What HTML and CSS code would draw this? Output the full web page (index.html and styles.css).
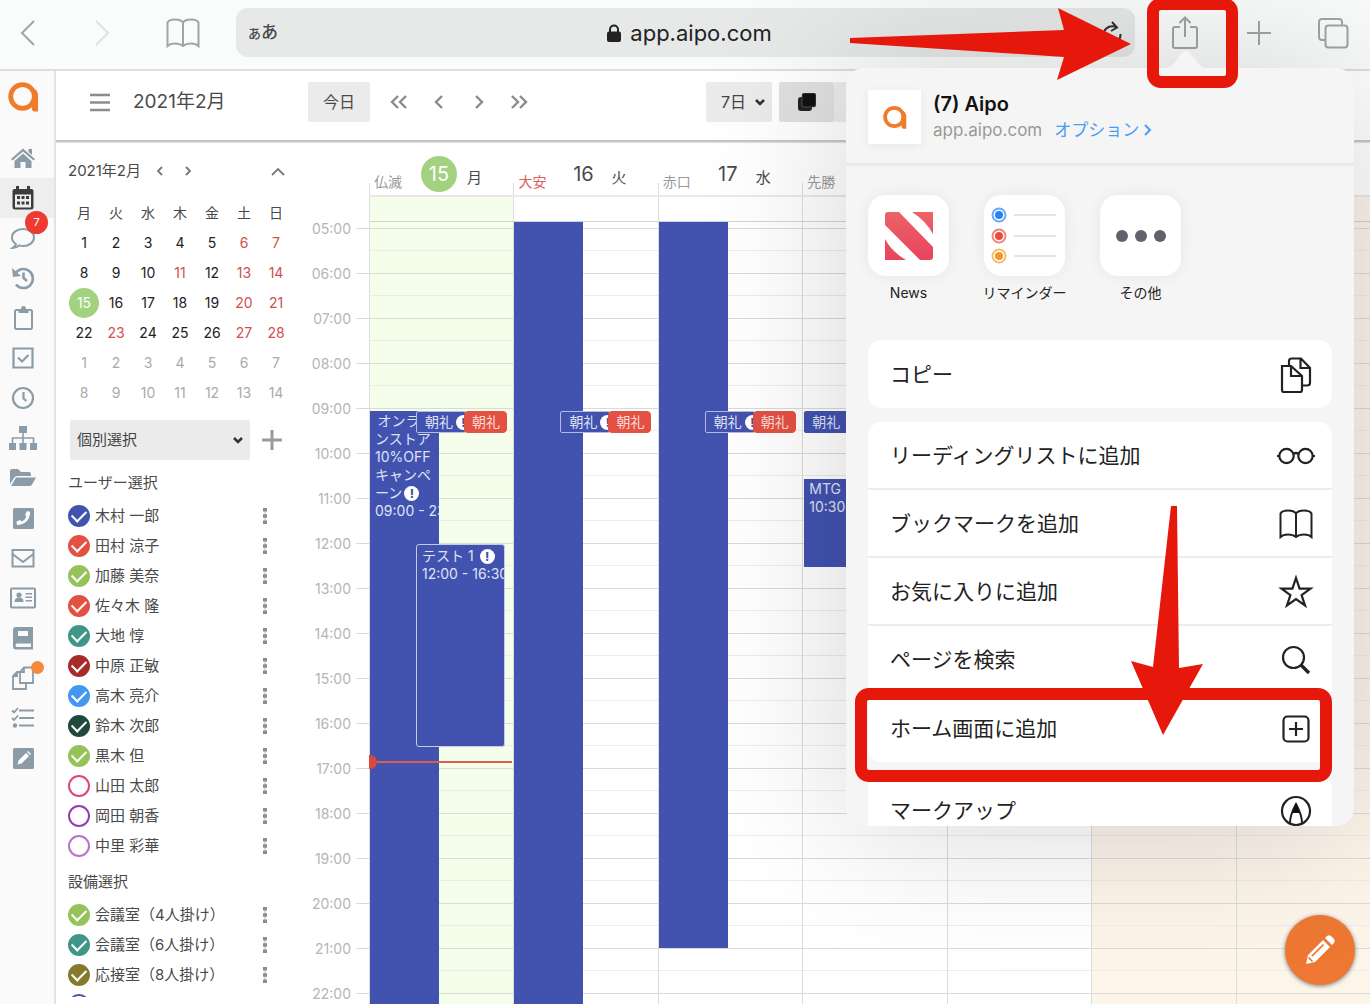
FILE: index.html
```html
<!DOCTYPE html>
<html lang="ja">
<head>
<meta charset="utf-8">
<meta name="viewport" content="width=device-width, initial-scale=1">
<title>(7) Aipo</title>
<link rel="stylesheet" href="styles.css">
</head>
<body>
<svg class="defs" aria-hidden="true">
  <symbol id="i-a" viewBox="0 0 32 32"><circle cx="15" cy="16" r="12.2" fill="none" stroke="#f07c2b" stroke-width="5"/><path d="M25 7Q31 9 31 15V31.500H27Q24.500 31 24.500 27Z" fill="#f07c2b"/></symbol>
  <symbol id="i-book" viewBox="0 0 34 30"><path d="M17 4.500V28M17 4.500Q15 1.500 9 1.500Q3 1.500 1.500 4.500V28Q4 25.500 9 25.500Q14 25.500 17 28Q20 25.500 25 25.500Q30 25.500 32.500 28V4.500Q31 1.500 25 1.500Q19 1.500 17 4.500Z" fill="none" stroke="currentColor" stroke-width="2"/></symbol>
  <symbol id="i-more" viewBox="0 0 6 18"><path d="M3 1V17" stroke="#bbb" stroke-width="1"/><path d="M1 1h4v3.500H1zM1 7.200h4v3.500H1zM1 13.400h4v3.500H1z" fill="#8c8c8c"/></symbol>
  <symbol id="i-down" viewBox="0 0 12 8"><path d="M2 2L6 6L10 2" fill="none" stroke="currentColor" stroke-width="2.600"/></symbol>
</svg>

<header class="browser">
  <button class="nav back" aria-label="戻る"><svg width="16" height="28" viewBox="0 0 16 28"><path d="M14 2L2 14L14 26" fill="none" stroke="currentColor" stroke-width="2"/></svg></button>
  <button class="nav forward" aria-label="進む"><svg width="16" height="28" viewBox="0 0 16 28"><path d="M2 2L14 14L2 26" fill="none" stroke="currentColor" stroke-width="2"/></svg></button>
  <button class="nav marks" aria-label="ブックマーク"><svg width="34" height="30"><use href="#i-book"/></svg></button>
  <div class="address">
    <button class="textsize" aria-label="表示オプション"><small>あ</small>あ</button>
    <span class="url"><svg width="14" height="18" viewBox="0 0 14 18"><path d="M3 8V5.500A4 4 0 0 1 11 5.500V8" fill="none" stroke="#222" stroke-width="2"/><rect y="7.500" width="14" height="10.500" rx="2" fill="#222"/></svg>app.aipo.com</span>
    <button class="reload" aria-label="再読み込み"><svg width="22" height="24" viewBox="0 0 22 24"><path d="M15.500 6.500A8.500 8.500 0 1 0 19.500 13M11 1L16 6.500L10 10" fill="none" stroke="#333" stroke-width="2"/></svg></button>
  </div>
  <button class="nav tool share" aria-label="共有"><svg width="28" height="34" viewBox="0 0 28 34"><path d="M9 11H4Q2 11 2 13V30Q2 32 4 32H24Q26 32 26 30V13Q26 11 24 11H19M14 21V2M8.500 7L14 1.500L19.500 7" fill="none" stroke="currentColor" stroke-width="2"/></svg></button>
  <button class="nav tool" aria-label="新規タブ"><svg width="24" height="24" viewBox="0 0 24 24"><path d="M12 0V24M0 12H24" stroke="currentColor" stroke-width="2"/></svg></button>
  <button class="nav tool" aria-label="タブ一覧"><svg width="32" height="32" viewBox="0 0 32 32"><path d="M8 23H5Q2 23 2 20V5Q2 2 5 2H22Q25 2 25 5V8" fill="none" stroke="currentColor" stroke-width="2"/><rect x="8.500" y="8.500" width="22" height="22" rx="3" fill="none" stroke="currentColor" stroke-width="2"/></svg></button>
</header>

<div class="app">
  <nav class="rail" aria-label="アプリ">
    <a class="logo" href="#" aria-label="Aipo"><svg width="31" height="31"><use href="#i-a"/></svg></a>
    <a href="#" aria-label="ホーム"><svg viewBox="0 0 26 24"><path d="M13 2.500L25 13L23.500 14.500L13 5.500L2.500 14.500L1 13ZM18.500 3H22V9L18.500 6ZM13 7.500L21.500 15V22H15.500V16H10.500V22H4.500V15Z" fill="currentColor"/></svg></a>
    <a class="on" href="#" aria-label="カレンダー"><svg viewBox="0 0 26 24"><path d="M2.500 5Q2.500 3 4.500 3H6V0H9V3H17V0H20V3H21.500Q23.500 3 23.500 5V21Q23.500 23.500 21 23.500H5Q2.500 23.500 2.500 21ZM5 8.500V21.500H21V8.500Z" fill="currentColor" fill-rule="evenodd"/><path d="M7 10h3v3H7zM11.500 10h3v3h-3zM16 10h3v3h-3zM7 15.500h3v3H7zM11.500 15.500h3v3h-3zM16 15.500h3v3h-3z" fill="currentColor"/></svg></a>
    <a href="#" aria-label="チャット 7件"><svg viewBox="0 0 26 24"><path d="M6 18Q2 15.500 2 11.500C2 6.500 7 3 13 3S24 6.500 24 11.500S19 20 13 20Q11 20 9 19.400Q6 22 2.500 22Q5.500 20 6 18Z" fill="none" stroke="currentColor" stroke-width="2"/></svg><b class="badge">7</b></a>
    <a href="#" aria-label="履歴"><svg viewBox="0 0 26 24"><path d="M5 8A9.500 9.500 0 1 1 6 18.500M13.500 6.500V12L17 15" fill="none" stroke="currentColor" stroke-width="2.600"/><path d="M2 2L3 11L11 10Z" fill="currentColor"/></svg></a>
    <a href="#" aria-label="メモ"><svg viewBox="0 0 26 24"><rect x="5" y="4" width="17" height="19" rx="1.500" fill="none" stroke="currentColor" stroke-width="2"/><path d="M8.500 3H11Q11 0 13.500 0T16 3H18.500V7H8.500Z" fill="currentColor"/></svg></a>
    <a href="#" aria-label="ToDo"><svg viewBox="0 0 26 24"><path d="M3.500 2.500H22.500V21.500H3.500ZM8 11.500L12 15.500L18.500 9" fill="none" stroke="currentColor" stroke-width="2.200"/></svg></a>
    <a href="#" aria-label="タイムカード"><svg viewBox="0 0 26 24"><circle cx="13" cy="12" r="10" fill="none" stroke="currentColor" stroke-width="2.200"/><path d="M13.500 6V12.500L16.500 15" fill="none" stroke="currentColor" stroke-width="2.200"/></svg></a>
    <a href="#" aria-label="組織"><svg class="wide" viewBox="0 0 30 24"><path d="M11 0h8v7h-8zM1 17h7v7H1zM11.500 17h7v7h-7zM22 17h7v7h-7z" fill="currentColor"/><path d="M15 6V18M4.500 18V12H25.500V18" fill="none" stroke="currentColor" stroke-width="1.600"/></svg></a>
    <a href="#" aria-label="ファイル"><svg viewBox="0 0 26 24"><path d="M0 18V5Q0 3 2 3H8L11 6H19Q21 6 21 8V10H7.500Q5 10 4 12Z" fill="currentColor"/><path d="M6 11.500H26L22 18.500Q21 20 19 20H1Z" fill="currentColor"/></svg></a>
    <a href="#" aria-label="電話メモ"><svg viewBox="0 0 26 24"><rect x="3" y="2" width="21" height="21" rx="1.500" fill="currentColor"/><path d="M17 5L20 6C20.500 13 15 19 7 19L6.500 15.500L10 14L11.500 15.500Q15 14 16.500 10.500L15 9Z" fill="#fff"/></svg></a>
    <a href="#" aria-label="メール"><svg viewBox="0 0 26 24"><path d="M2.500 4H23.500V20.500H2.500ZM2.500 8L13 16L23.500 8" fill="none" stroke="currentColor" stroke-width="2"/></svg></a>
    <a href="#" aria-label="アドレス帳"><svg viewBox="0 0 26 24"><rect x="1" y="2.500" width="24" height="19" rx="1" fill="none" stroke="currentColor" stroke-width="2"/><circle cx="9" cy="9" r="2.600" fill="currentColor"/><path d="M4.500 16Q4.500 11.500 9 11.500T13.500 16ZM15.500 7H22V8.500H15.500ZM15.500 10.500H22V12H15.500ZM15.500 14H22V15.500H15.500Z" fill="currentColor"/></svg></a>
    <a href="#" aria-label="レポート"><svg viewBox="0 0 26 24"><path d="M6 1H23V23.500H6Q3 23.500 3 20V4Q3 1 6 1ZM8 5V10H18V5ZM6.500 17.500Q5.500 18.500 5.500 19.500Q5.500 21 7 21H21V17.500Z" fill="currentColor" fill-rule="evenodd"/></svg></a>
    <a href="#" aria-label="ワークフロー"><svg viewBox="0 0 26 24"><path d="M10 17V6L14 1.500H23V17ZM14 1.500V6H10M10 6H7L3 10V23H16V17M7 6V10H3" fill="none" stroke="currentColor" stroke-width="1.800"/></svg><i class="dot"></i></a>
    <a href="#" aria-label="タスク"><svg viewBox="0 0 26 24"><path d="M9 4.500H24M9 12H24M9 19.500H24" stroke="currentColor" stroke-width="2.200"/><path d="M2 4.500L4 6.500L8 2M2 12L4 14L8 9.500" fill="none" stroke="currentColor" stroke-width="1.800"/><circle cx="5" cy="19.500" r="2.200" fill="currentColor"/></svg></a>
    <a href="#" aria-label="ブログ"><svg viewBox="0 0 26 24"><rect x="3" y="2" width="21" height="21" rx="1.500" fill="currentColor"/><path d="M7.500 18.500L8.500 14.500L16 7L19 10L11.500 17.500ZM17 6L18 5L21 8L20 9Z" fill="#fff"/></svg></a>
  </nav>

  <main class="main">
    <div class="toolbar">
      <button class="menu" aria-label="メニュー"><svg width="20" height="19" viewBox="0 0 20 19"><path d="M0 2H20M0 9.500H20M0 17H20" stroke="#8c8c8c" stroke-width="2.400"/></svg></button>
      <h1>2021年2月</h1>
      <button class="box today">今日</button>
      <button class="step" aria-label="前の週"><svg width="18" height="14" viewBox="0 0 18 14"><path d="M8 1L2 7L8 13M16 1L10 7L16 13" fill="none" stroke="currentColor" stroke-width="2.400"/></svg></button>
      <button class="step" aria-label="前の日"><svg width="10" height="14" viewBox="0 0 10 14"><path d="M8 1L2 7L8 13" fill="none" stroke="currentColor" stroke-width="2.400"/></svg></button>
      <button class="step" aria-label="次の日"><svg width="10" height="14" viewBox="0 0 10 14"><path d="M2 1L8 7L2 13" fill="none" stroke="currentColor" stroke-width="2.400"/></svg></button>
      <button class="step" aria-label="次の週"><svg width="18" height="14" viewBox="0 0 18 14"><path d="M2 1L8 7L2 13M10 1L16 7L10 13" fill="none" stroke="currentColor" stroke-width="2.400"/></svg></button>
      <div class="views">
        <label class="pick span"><select aria-label="表示期間"><option>7日</option></select><svg width="12" height="8"><use href="#i-down"/></svg></label>
        <button class="box stack" aria-label="重ねて表示"><svg width="18" height="18" viewBox="0 0 18 18"><rect y="4" width="14" height="14" rx="3" fill="#222"/><rect x="4" width="14" height="14" rx="2" fill="#111" stroke="#777" stroke-width=".6"/></svg></button><button class="box split" aria-label="並べて表示"></button>
      </div>
    </div>

    <div class="body">
      <aside class="side">
        <div class="month"><h2>2021年2月</h2>
          <button aria-label="前の月"><svg width="7" height="10" viewBox="0 0 7 10"><path d="M6 1L2 5L6 9" fill="none" stroke="#777" stroke-width="1.800"/></svg></button>
          <button aria-label="次の月"><svg width="7" height="10" viewBox="0 0 7 10"><path d="M1 1L5 5L1 9" fill="none" stroke="#777" stroke-width="1.800"/></svg></button>
          <button class="fold" aria-label="折りたたむ"><svg width="14" height="9" viewBox="0 0 14 9"><path d="M1 8L7 2L13 8" fill="none" stroke="#777" stroke-width="1.800"/></svg></button></div>
        <table class="mini">
          <thead><tr><th>月</th><th>火</th><th>水</th><th>木</th><th>金</th><th>土</th><th>日</th></tr></thead>
          <tbody>
            <tr><td>1</td><td>2</td><td>3</td><td>4</td><td>5</td><td class="h">6</td><td class="h">7</td></tr>
            <tr><td>8</td><td>9</td><td>10</td><td class="h">11</td><td>12</td><td class="h">13</td><td class="h">14</td></tr>
            <tr><td class="now"><span>15</span></td><td>16</td><td>17</td><td>18</td><td>19</td><td class="h">20</td><td class="h">21</td></tr>
            <tr><td>22</td><td class="h">23</td><td>24</td><td>25</td><td>26</td><td class="h">27</td><td class="h">28</td></tr>
            <tr class="out"><td>1</td><td>2</td><td>3</td><td>4</td><td>5</td><td>6</td><td>7</td></tr>
            <tr class="out"><td>8</td><td>9</td><td>10</td><td>11</td><td>12</td><td>13</td><td>14</td></tr>
          </tbody>
        </table>
        <div class="group"><label class="pick who"><select aria-label="グループ"><option>個別選択</option></select><svg width="12" height="8"><use href="#i-down"/></svg></label>
          <button aria-label="追加"><svg width="20" height="20" viewBox="0 0 20 20"><path d="M10 0V20M0 10H20" stroke="#999" stroke-width="3"/></svg></button></div>
        <h3>ユーザー選択</h3>
        <ul class="people">
          <li><label><input type="checkbox" class="c-indigo" checked>木村 一郎</label><button aria-label="操作"><svg width="6" height="18"><use href="#i-more"/></svg></button></li>
          <li><label><input type="checkbox" class="c-red" checked>田村 涼子</label><button aria-label="操作"><svg width="6" height="18"><use href="#i-more"/></svg></button></li>
          <li><label><input type="checkbox" class="c-green" checked>加藤 美奈</label><button aria-label="操作"><svg width="6" height="18"><use href="#i-more"/></svg></button></li>
          <li><label><input type="checkbox" class="c-red" checked>佐々木 隆</label><button aria-label="操作"><svg width="6" height="18"><use href="#i-more"/></svg></button></li>
          <li><label><input type="checkbox" class="c-teal" checked>大地 惇</label><button aria-label="操作"><svg width="6" height="18"><use href="#i-more"/></svg></button></li>
          <li><label><input type="checkbox" class="c-crimson" checked>中原 正敏</label><button aria-label="操作"><svg width="6" height="18"><use href="#i-more"/></svg></button></li>
          <li><label><input type="checkbox" class="c-blue" checked>高木 亮介</label><button aria-label="操作"><svg width="6" height="18"><use href="#i-more"/></svg></button></li>
          <li><label><input type="checkbox" class="c-forest" checked>鈴木 次郎</label><button aria-label="操作"><svg width="6" height="18"><use href="#i-more"/></svg></button></li>
          <li><label><input type="checkbox" class="c-green" checked>黒木 但</label><button aria-label="操作"><svg width="6" height="18"><use href="#i-more"/></svg></button></li>
          <li><label><input type="checkbox" class="c-pink">山田 太郎</label><button aria-label="操作"><svg width="6" height="18"><use href="#i-more"/></svg></button></li>
          <li><label><input type="checkbox" class="c-purple">岡田 朝香</label><button aria-label="操作"><svg width="6" height="18"><use href="#i-more"/></svg></button></li>
          <li><label><input type="checkbox" class="c-orchid">中里 彩華</label><button aria-label="操作"><svg width="6" height="18"><use href="#i-more"/></svg></button></li>
        </ul>
        <h3>設備選択</h3>
        <ul class="people">
          <li><label><input type="checkbox" class="c-green" checked>会議室（4人掛け）</label><button aria-label="操作"><svg width="6" height="18"><use href="#i-more"/></svg></button></li>
          <li><label><input type="checkbox" class="c-teal" checked>会議室（6人掛け）</label><button aria-label="操作"><svg width="6" height="18"><use href="#i-more"/></svg></button></li>
          <li><label><input type="checkbox" class="c-olive" checked>応接室（8人掛け）</label><button aria-label="操作"><svg width="6" height="18"><use href="#i-more"/></svg></button></li>
          <li><label><input type="checkbox" class="c-indigo" aria-label="設備"></label></li>
        </ul>
      </aside>

      <section class="week">
        <div class="gutter">
          <ol>
            <li>05:00</li><li>06:00</li><li>07:00</li><li>08:00</li><li>09:00</li><li>10:00</li><li>11:00</li><li>12:00</li><li>13:00</li><li>14:00</li><li>15:00</li><li>16:00</li><li>17:00</li><li>18:00</li><li>19:00</li><li>20:00</li><li>21:00</li><li>22:00</li>
          </ol>
        </div>
        <div class="days">
          <div class="day today-col">
            <div class="head"><small>仏滅</small><b>15</b><span>月</span></div><div class="allday"></div>
            <div class="slots">
              <div class="ev long" style="--start:9;--end:24">&thinsp;オンラ<br>ンストア<br>10%OFF<br>キャンペ<br>ーン<i class="mark">!</i><br>09:00 - 23:00</div>
              <div class="ev chip edge">朝礼 <i class="mark">!</i></div>
              <div class="ev chip guest">朝礼</div>
              <div class="ev test" style="--start:12;--end:16.5">テスト 1 <i class="mark">!</i><br>12:00 - 16:30</div>
              <div class="nowline"></div>
            </div>
          </div>
          <div class="day">
            <div class="head"><small class="lucky">大安</small><b>16</b><span>火</span></div><div class="allday"></div>
            <div class="slots">
              <div class="ev long early" style="--end:24"></div>
              <div class="ev chip edge">朝礼 <i class="mark">!</i></div>
              <div class="ev chip guest">朝礼</div>
            </div>
          </div>
          <div class="day">
            <div class="head"><small>赤口</small><b>17</b><span>水</span></div><div class="allday"></div>
            <div class="slots">
              <div class="ev long early" style="--end:21"></div>
              <div class="ev chip edge">朝礼 <i class="mark">!</i></div>
              <div class="ev chip guest">朝礼</div>
            </div>
          </div>
          <div class="day">
            <div class="head"><small>先勝</small><b>18</b><span>木</span></div><div class="allday"></div>
            <div class="slots">
              <div class="ev chip first">朝礼</div>
              <div class="ev meet" style="--start:10.5;--end:12.5">MTG<br>10:30 - 12:30</div>
            </div>
          </div>
          <div class="day"><div class="head"></div><div class="allday"></div><div class="slots"></div></div>
          <div class="day off"><div class="head"></div><div class="allday"></div><div class="slots"></div></div>
          <div class="day off"><div class="head"></div><div class="allday"></div><div class="slots"></div></div>
        </div>
      </section>
    </div>
  </main>
</div>

<button class="fab" aria-label="予定を追加"><svg width="34" height="34" viewBox="0 0 34 34"><path d="M3 31L5 22L20 7L27 14L12 29ZM22 5L24 3Q26 1.500 28 3L31 6Q32.500 8 31 10L29 12Z" fill="#fff"/><path d="M9 23L20.500 11.500M5.500 24.500L9.500 28.500" stroke="#e6702a" stroke-width="1.600"/></svg></button>

<section class="sheet" aria-label="共有">
  <svg class="beak" width="46" height="18" viewBox="0 0 46 18"><path d="M0 18Q8 17 12 11L19 2Q23 -2 27 2L34 11Q38 17 46 18Z" fill="#f5f5f5"/></svg>
  <div class="scroll">
    <header class="page">
      <div class="thumb"><svg width="24" height="24"><use href="#i-a"/></svg></div>
      <div><h2>(7) Aipo</h2><p>app.aipo.com<a href="#">オプション<svg width="9" height="14" viewBox="0 0 9 14"><path d="M2 2L7 7L2 12" fill="none" stroke="currentColor" stroke-width="2"/></svg></a></p></div>
    </header>
    <div class="apps">
      <button><span class="tile"><svg width="50" height="50" viewBox="0 0 50 50"><defs><linearGradient id="n" x2="0" y2="1"><stop stop-color="#ec6368"/><stop offset="1" stop-color="#e8435e"/></linearGradient></defs><path d="M1 4Q1 1 4 1H15L49 36V46Q49 49 46 49H36L1 14ZM28 1H49V23Q42 10 28 1ZM1 28Q8 41 22 49H1Z" fill="url(#n)"/></svg></span>News</button>
      <button><span class="tile"><svg width="81" height="81" viewBox="0 0 81 81"><path d="M30 20H72M30 41H72M30 61H72" stroke="#e3e5e7" stroke-width="2"/><g fill="none" stroke-width="2"><circle cx="15" cy="20" r="6.500" stroke="#67a9fb"/><circle cx="15" cy="41" r="6.500" stroke="#f38379"/><circle cx="15" cy="61" r="6.500" stroke="#f5bd69"/></g><circle cx="15" cy="20" r="4" fill="#2d7ff5"/><circle cx="15" cy="41" r="4" fill="#ea4c3b"/><circle cx="15" cy="61" r="4" fill="#f0992d"/></svg></span>リマインダー</button>
      <button><span class="tile"><svg width="52" height="12" viewBox="0 0 52 12"><g fill="#62626c"><circle cx="7" cy="6" r="6"/><circle cx="26" cy="6" r="6"/><circle cx="45" cy="6" r="6"/></g></svg></span>その他</button>
    </div>
    <div class="acts">
      <button>コピー<svg viewBox="0 0 40 40"><path d="M6 11H15L26 21V35Q26 37 24 37H8Q6 37 6 35ZM15 11V21H26M13 10.500V6Q13 3.500 16 3.500H25L34 13V28Q34 30.500 31 30.500H26M24.500 3.500V13H34" fill="none" stroke="#222" stroke-width="2.200"/></svg></button>
    </div>
    <div class="acts">
      <button>リーディングリストに追加<svg viewBox="0 0 40 40"><path d="M17.500 18Q20 16 22.500 18M1 20H3M37 20H39" fill="none" stroke="#222" stroke-width="2.200"/><circle cx="10.500" cy="20" r="7.200" fill="none" stroke="#222" stroke-width="2.200"/><circle cx="29.500" cy="20" r="7.200" fill="none" stroke="#222" stroke-width="2.200"/></svg></button>
      <button>ブックマークを追加<svg viewBox="-3 -5 40 40"><use href="#i-book" width="34" height="30"/></svg></button>
      <button>お気に入りに追加<svg viewBox="0 0 40 40"><path d="M20 6L23.600 16.600H34.500L25.600 23.200L29 33.500L20 27.200L11 33.500L14.400 23.200L5.500 16.600H16.400Z" fill="none" stroke="#222" stroke-width="2.200"/></svg></button>
      <button>ページを検索<svg viewBox="0 0 40 40"><circle cx="17.500" cy="17.500" r="10.500" fill="none" stroke="#222" stroke-width="2.200"/><path d="M25 25L33 33" stroke="#222" stroke-width="3.400"/></svg></button>
      <button>ホーム画面に追加<svg viewBox="0 0 40 40"><rect x="7.500" y="7.500" width="25" height="25" rx="4" fill="none" stroke="#222" stroke-width="2.200"/><path d="M20 13V27M13 20H27" stroke="#222" stroke-width="2.200"/></svg></button>
    </div>
    <div class="acts">
      <button>マークアップ<svg viewBox="0 0 40 40"><circle cx="20" cy="20" r="14" fill="none" stroke="#222" stroke-width="2.200"/><path d="M14 32Q14 24 20 13Q26 24 26 32" fill="none" stroke="#222" stroke-width="2"/><path d="M20 12L24 22H16Z" fill="#111"/></svg></button>
    </div>
  </div>
</section>

<svg class="notes" width="520" height="800" viewBox="850 0 520 800" aria-hidden="true">
  <g fill="none" stroke="#e6180c" stroke-width="12"><rect x="1153" y="4" width="79" height="78" rx="8"/><rect x="861" y="694" width="465" height="82" rx="8"/></g>
  <path d="M850 38L1064 30L1058 8L1131 44L1057 80L1064 57L850 43ZM1171 506H1177L1179 668L1203 664L1163 735L1131 661L1153 667Z" fill="#e6180c"/>
</svg>
</body>
</html>
```
FILE: styles.css
```css
* { box-sizing: border-box; }

body {
  position: relative;
  display: flex;
  flex-direction: column;
  height: 100vh;
  margin: 0;
  overflow: hidden;
  color: #4a4a4a;
  background: #fff;
  font: 14px/20px Inter, "Noto Sans CJK JP", sans-serif;
}

h1, h2, h3, p, ul, ol { margin: 0; padding: 0; font-weight: 400; list-style: none; }
button { padding: 0; border: 0; background: none; color: inherit; font: inherit; }
a { color: inherit; text-decoration: none; }
svg { flex: none; display: block; }
.defs { position: absolute; width: 0; height: 0; }

/* Browser bar */
.browser {
  flex: none;
  display: flex;
  align-items: center;
  height: 71px;
  padding-bottom: 4px;
  border-bottom: 2px solid #dedede;
  background: #fafcfc;
}
.nav { display: flex; justify-content: center; color: #a3a5a5; }
.back { width: 56px; }
.forward { width: 92px; color: #e0e2e2; }
.marks { width: 70px; }
.tool { width: 74px; }
.share { margin-left: 13px; }
.address {
  flex: 1;
  display: flex;
  align-items: center;
  justify-content: space-between;
  height: 49px;
  margin-left: 18px;
  padding: 0 12px;
  border-radius: 12px;
  background: #e7e9e9;
}
.textsize { font-size: 17px; font-weight: 500; line-height: 22px; }
.textsize small { font-size: 13px; }
.url { display: flex; align-items: center; gap: 9px; color: #222; font-size: 22px; }

/* Icon rail */
.app { flex: 1; display: flex; min-height: 0; }
.rail {
  flex: none;
  width: 56px;
  border-right: 2px solid #e3e3e3;
  background: #fafafa;
  color: #8a9ca7;
}
.rail a {
  position: relative;
  display: flex;
  align-items: center;
  height: 40px;
  padding-left: 10px;
}
.rail svg { width: 26px; height: 24px; }
.rail .wide { width: 30px; margin-left: -2px; }
.rail .logo { height: 67px; padding: 0 0 16px 8px; }
.rail .logo svg { width: 31px; height: 31px; }
.rail .on { background: #eee; color: #3c3c3c; }
.badge {
  position: absolute;
  left: 25px;
  top: -7px;
  z-index: 1;
  width: 23px;
  border-radius: 12px;
  background: #ee3a30;
  color: #fff;
  font-size: 11px;
  font-weight: 400;
  line-height: 23px;
  text-align: center;
}
.dot {
  position: absolute;
  left: 31px;
  top: 3px;
  width: 13px;
  height: 13px;
  border-radius: 50%;
  background: #f28a3c;
}

/* Calendar toolbar */
.main { flex: 1; display: flex; flex-direction: column; min-width: 0; }
.toolbar {
  flex: none;
  display: flex;
  align-items: center;
  height: 71px;
  padding: 0 0 7px 34px;
  border-bottom: 2px solid #c6c6c6;
  box-shadow: 0 1px 1px #e4e4e4;
}
.toolbar h1 { width: 175px; margin-left: 23px; font-size: 19px; }
.box { height: 40px; border-radius: 2px; background: #ebebeb; }
.today { width: 62px; margin-right: 9px; font-size: 16px; }
.step { display: flex; justify-content: center; width: 40px; color: #8b8b8b; }
.views { display: flex; width: 664px; margin-left: auto; }
.pick {
  display: flex;
  align-items: center;
  height: 40px;
  padding-right: 6px;
  border-radius: 2px;
  background: #ebebeb;
  color: #333;
}
.pick select {
  flex: 1;
  min-width: 0;
  padding: 0;
  border: 0;
  background: none;
  color: #444;
  font: inherit;
  appearance: none;
}
.span { width: 66px; margin-right: 7px; padding-left: 15px; font-size: 16px; }
.stack { display: flex; align-items: center; justify-content: center; width: 55px; background: #e0e0e0; }
.split { width: 55px; }

/* Sidebar */
.body { flex: 1; display: flex; min-height: 0; }
.side { flex: none; width: 244px; margin-bottom: 7px; padding: 17px 8px 0 12px; overflow: hidden; }
.month { display: flex; align-items: center; gap: 22px; height: 24px; margin-bottom: 15px; }
.month h2 { margin-right: -7px; font-size: 15px; }
.month .fold { margin-left: auto; padding-right: 7px; }
.mini { width: 224px; border-collapse: collapse; table-layout: fixed; }
.mini th, .mini td { height: 30px; padding: 0; font-weight: 400; text-align: center; }
.mini td { color: #222; }
.mini .h { color: #d0504d; }
.mini .out td { color: #aaa; }
.mini .now span {
  display: block;
  width: 30px;
  margin: 0 auto;
  border-radius: 50%;
  background: #a2d280;
  color: #fff;
  line-height: 30px;
}
.group { display: flex; align-items: center; gap: 12px; margin: 12px 0 13px 2px; }
.who { width: 180px; padding-left: 7px; font-size: 15px; }
.side h3 { font-size: 15px; margin-bottom: 8px; }
.people { margin-bottom: 11px; }
.people li {
  display: flex;
  align-items: center;
  justify-content: space-between;
  height: 30px;
  padding-right: 24px;
}
.people label { display: flex; align-items: center; gap: 5px; font-size: 15px; }
.people input {
  display: flex;
  align-items: center;
  justify-content: center;
  width: 22px;
  height: 22px;
  margin: 0;
  border: 2px solid var(--c);
  border-radius: 50%;
  appearance: none;
}
.people input:checked { background: var(--c); }
.people input:checked::after {
  content: "";
  flex: none;
  width: 12px;
  height: 7px;
  margin-bottom: 3px;
  border: solid #fff;
  border-width: 0 0 2px 2px;
  transform: rotate(-45deg);
}
.c-indigo { --c: #4252af; }
.c-red { --c: #e35142; }
.c-green { --c: #96c25a; }
.c-teal { --c: #3f9688; }
.c-crimson { --c: #a72b28; }
.c-blue { --c: #4397f0; }
.c-forest { --c: #20493e; }
.c-pink { --c: #de4676; }
.c-purple { --c: #923eb5; }
.c-orchid { --c: #b574cd; }
.c-olive { --c: #857a2b; }

/* Week grid */
.week { --hour: 45px; flex: 1; display: flex; min-width: 0; overflow: hidden; }
.gutter { flex: none; width: 69px; padding-top: 64px; color: #b5b5b5; }
.gutter li { display: flex; align-items: center; justify-content: flex-end; gap: 5px; height: var(--hour); }
.gutter li::after { content: ""; width: 13px; height: 1px; background: #d9d9d9; }
.days { flex: 1; display: grid; grid-template-columns: repeat(7, 1fr); margin-right: -10px; }
.day { display: flex; flex-direction: column; min-width: 0; min-height: 0; }
.head {
  flex: none;
  display: flex;
  align-items: flex-end;
  height: 55px;
  padding: 0 0 3px 5px;
  border-bottom: 2px solid #e9e9e9;
  background: linear-gradient(#ddd, #ddd) left bottom / 1px 12px no-repeat;
}
.head small { width: 47px; color: #999; font-size: 14px; line-height: 20px; }
.head .lucky { color: #e0605c; }
.head b { width: 36px; margin-right: 10px; font-size: 20px; font-weight: 400; line-height: 36px; text-align: center; }
.head span { font-size: 15px; line-height: 28px; }
.today-col b { border-radius: 50%; background: #a2d280; color: #fff; }
.allday { flex: none; height: 25px; border-left: 1px solid #ddd; border-bottom: 1px solid #d3d3d3; }
.slots {
  position: relative;
  flex: 1;
  min-height: 0;
  border-left: 1px solid #dcdcdc;
  background-image: linear-gradient(#dadada 0 1px, transparent 1px 22px, #ececec 22px 23px, transparent 23px);
  background-position: 0 6px;
  background-size: 100% var(--hour);
}
.today-col .allday, .today-col .slots { background-color: #f5feea; }
.off .allday, .off .slots { background-color: #fdf4ea; }

.ev {
  position: absolute;
  top: calc(9px + (var(--start) - 5) * var(--hour));
  height: calc((var(--end) - var(--start)) * var(--hour) - 2px);
  overflow: hidden;
  padding: 1px 0 0 5px;
  background: #4252af;
  color: #dfe3f5;
  line-height: 18px;
  white-space: nowrap;
}
.long { left: 0; width: 69px; }
.early { top: 0; height: calc(6px + (var(--end) - 5) * var(--hour)); }
.chip {
  --start: 9;
  height: 22px;
  padding: 1px 0 0 8px;
  border: 1px solid #b4bbe0;
  border-radius: 2px;
}
.chip .mark { margin-left: -1px; }
.edge { left: 46px; width: 50px; }
.guest { left: 94px; width: 43px; border-color: #e35142; border-radius: 4px; background: #e35142; color: #fbdad6; padding-left: 7px; }
.first { left: 1px; width: 90px; padding-left: 7px; border-color: #4252af; }
.test { left: 46px; width: 89px; margin-top: -2px; height: 203px; padding-top: 2px; border: 1px solid #c5cae6; border-radius: 3px; }
.meet { left: 1px; width: 136px; }
.mark {
  display: inline-block;
  width: 15px;
  margin-left: 2px;
  border-radius: 50%;
  background: #fff;
  color: #4252af;
  font-size: 12px;
  font-style: normal;
  font-weight: 800;
  line-height: 15px;
  text-align: center;
}
.nowline {
  position: absolute;
  left: -1px;
  right: 1px;
  top: 539px;
  height: 2px;
  background: #dd5d50;
}
.nowline::before {
  content: "";
  position: absolute;
  top: -6px;
  width: 8px;
  height: 14px;
  border-radius: 0 8px 8px 0;
  background: #d9483c;
}

.fab {
  position: absolute;
  right: 15px;
  bottom: 19px;
  display: flex;
  align-items: center;
  justify-content: center;
  width: 70px;
  height: 70px;
  border-radius: 50%;
  background: #ee7831;
  box-shadow: 0 1px 4px rgba(0, 0, 0, .5);
}

/* Share sheet */
.sheet {
  position: absolute;
  top: 68px;
  right: 16px;
  bottom: 178px;
  width: 508px;
  border-radius: 18px;
  background: #f5f5f5;
  box-shadow: 0 0 150px rgba(0, 0, 0, .17);
  color: #222;
}
.beak { position: absolute; right: 145px; top: -17px; }
.scroll { height: 100%; overflow: hidden; border-radius: 18px; }
.page {
  display: flex;
  gap: 12px;
  height: 98px;
  padding: 22px 22px 0;
  border-bottom: 3px solid #eaeaea;
}
.thumb {
  display: flex;
  align-items: center;
  justify-content: center;
  width: 53px;
  height: 54px;
  background: #fff;
  box-shadow: 0 2px 10px rgba(0, 0, 0, .06);
}
.page h2 { color: #111; font-size: 20px; font-weight: 600; line-height: 28px; }
.page p { display: flex; align-items: center; gap: 12px; color: #999; font-size: 17px; line-height: 24px; }
.page a { display: flex; align-items: center; gap: 4px; color: #4a9bf5; }
.apps { display: flex; gap: 35px; padding: 29px 22px 0; }
.apps button { display: flex; flex-direction: column; align-items: center; gap: 7px; width: 81px; white-space: nowrap; }
.tile {
  display: flex;
  align-items: center;
  justify-content: center;
  width: 81px;
  height: 81px;
  border-radius: 18px;
  background: #fff;
  box-shadow: 0 0 16px rgba(0, 0, 0, .06);
}
.acts { margin: 14px 22px 0; overflow: hidden; border-radius: 14px; background: #fff; }
.apps + .acts { margin-top: 37px; }
.acts button {
  display: flex;
  align-items: center;
  justify-content: space-between;
  width: 100%;
  height: 68px;
  padding: 2px 16px 0 22px;
  border-bottom: 2px solid #ededed;
  font-size: 21px;
  text-align: left;
}
.acts button:last-child { border-bottom: 0; }
.acts svg { width: 40px; height: 40px; }

.notes { position: absolute; top: 0; right: 0; pointer-events: none; }
```
